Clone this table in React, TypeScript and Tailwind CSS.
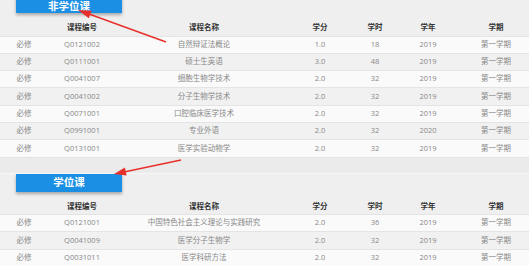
import React from 'react'

interface Course {
  type: string
  code: string
  name: string
  credit: string
  hours: number
  year: number
  term: string
}

const nonDegree: Course[] = [
  { type: '必修', code: 'Q0121002', name: '自然辩证法概论', credit: '1.0', hours: 18, year: 2019, term: '第一学期' },
  { type: '必修', code: 'Q0111001', name: '硕士生英语', credit: '3.0', hours: 48, year: 2019, term: '第一学期' },
  { type: '必修', code: 'Q0041007', name: '细胞生物学技术', credit: '2.0', hours: 32, year: 2019, term: '第一学期' },
  { type: '必修', code: 'Q0041002', name: '分子生物学技术', credit: '2.0', hours: 32, year: 2019, term: '第一学期' },
  { type: '必修', code: 'Q0071001', name: '口腔临床医学技术', credit: '2.0', hours: 32, year: 2019, term: '第一学期' },
  { type: '必修', code: 'Q0991001', name: '专业外语', credit: '2.0', hours: 32, year: 2020, term: '第一学期' },
  { type: '必修', code: 'Q0131001', name: '医学实验动物学', credit: '2.0', hours: 32, year: 2019, term: '第一学期' },
]

const degree: Course[] = [
  { type: '必修', code: 'Q0121001', name: '中国特色社会主义理论与实践研究', credit: '2.0', hours: 36, year: 2019, term: '第一学期' },
  { type: '必修', code: 'Q0041009', name: '医学分子生物学', credit: '2.0', hours: 32, year: 2019, term: '第一学期' },
  { type: '必修', code: 'Q0031011', name: '医学科研方法', credit: '2.0', hours: 32, year: 2019, term: '第一学期' },
]

const cols = 'grid grid-cols-[48px_68px_176px_56px_54px_52px_84px] w-[538px]'

function Section({ title, rows, top }: { title: string; rows: Course[]; top?: boolean }) {
  return (
    <div className={top ? '-mt-[5px]' : 'border-t border-[#f7f7f7]'}>
      <div className="pl-[16px]">
        <div
          className={`w-[106px] h-[18px] bg-[#1a8fe3] shadow-[0_2px_3px_rgba(0,0,0,0.3)] flex items-center justify-center text-white font-bold text-[10.5px] leading-none ${top ? 'pt-[4px]' : ''}`}
        >
          {title}
        </div>
      </div>
      {/* 表头 */}
      <div className={`${cols} h-[22.5px] pt-[9px] text-[7.5px] leading-[10px] font-bold text-[#333] text-center`}>
        <div></div>
        <div>课程编号</div>
        <div>课程名称</div>
        <div>学分</div>
        <div>学时</div>
        <div>学年</div>
        <div>学期</div>
      </div>
      {rows.map((r, i) => (
        <div
          key={r.code}
          className={`${cols} h-[17.3px] items-center text-[7.5px] leading-none text-[#888] text-center border-t border-[#e4e4e4] ${i % 2 === 0 ? 'bg-[#fafafa]' : 'bg-[#f1f1f1]'}`}
        >
          <div>{r.type}</div>
          <div>{r.code}</div>
          <div className="whitespace-nowrap">{r.name}</div>
          <div>{r.credit}</div>
          <div>{r.hours}</div>
          <div>{r.year}</div>
          <div>{r.term}</div>
        </div>
      ))}
    </div>
  )
}

export default function App() {
  return (
    <div
      className="relative w-[529px] h-[266px] overflow-hidden bg-[#efefef]"
      style={{ fontFamily: '"Open Sans", "Noto Sans CJK SC", sans-serif' }}
    >
      <Section title="非学位课" rows={nonDegree} top />
      <div className="h-[16px] bg-[#ebebeb] border-t border-[#e4e4e4]" />
      <Section title="学位课" rows={degree} />

      {/* 红色标注箭头 */}
      <svg className="absolute left-0 top-0 pointer-events-none" width="529" height="266">
        <line x1="166" y1="42" x2="89" y2="14" stroke="#e8302a" strokeWidth="1.4" />
        <polygon points="78,10 88.8,18.2 91.6,10.7" fill="#e8302a" />
        <line x1="181" y1="160" x2="124" y2="172" stroke="#e8302a" strokeWidth="1.4" />
        <polygon points="114,174 126.6,175.4 124.9,167.6" fill="#e8302a" />
      </svg>
    </div>
  )
}
